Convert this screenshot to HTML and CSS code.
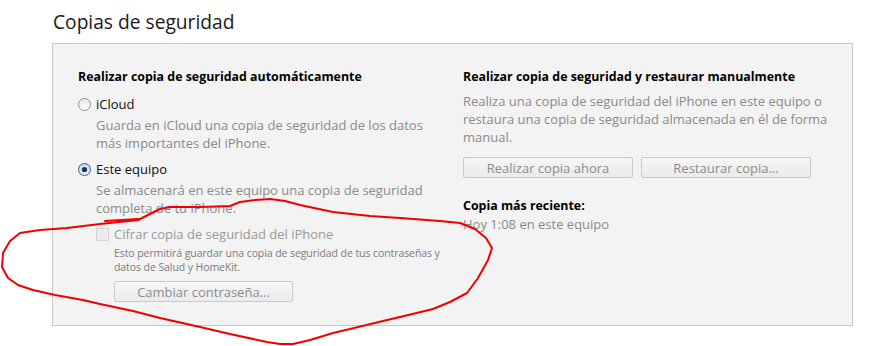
FILE: index.html
```html
<!DOCTYPE html>
<html lang="es">
<head>
<meta charset="utf-8">
<title>Copias de seguridad</title>
<link rel="stylesheet" href="styles.css">
</head>
<body>
<div class="page">
  <h1 class="title">Copias de seguridad</h1>
  <div class="panel">
    <div class="col col-left">
      <div class="heading">Realizar copia de seguridad automáticamente</div>
      <div class="option first">
        <svg class="radio" width="13" height="13" viewBox="0 0 13 13"><defs><linearGradient id="rg1" x1="0" y1="0" x2="0" y2="1"><stop offset="0" stop-color="#e9e9e9"/><stop offset="1" stop-color="#ffffff"/></linearGradient></defs><circle cx="6.5" cy="6.5" r="6" fill="url(#rg1)" stroke="#8e8f8f"/></svg>
        <span class="label">iCloud</span>
      </div>
      <div class="desc">Guarda en iCloud una copia de seguridad de los datos<br>más importantes del iPhone.</div>
      <div class="option">
        <svg class="radio" width="13" height="13" viewBox="0 0 13 13"><defs><linearGradient id="rg2" x1="0" y1="0" x2="0" y2="1"><stop offset="0" stop-color="#c3d9ee"/><stop offset="1" stop-color="#e8f1fa"/></linearGradient></defs><circle cx="6.5" cy="6.5" r="6" fill="url(#rg2)" stroke="#2c628b"/><circle cx="6.5" cy="6.5" r="2.6" fill="#1d3650"/></svg>
        <span class="label">Este equipo</span>
      </div>
      <div class="desc">Se almacenará en este equipo una copia de seguridad<br>completa de tu iPhone.</div>
      <div class="sub">
        <div class="check-row">
          <span class="checkbox"></span>
          <span class="label disabled">Cifrar copia de seguridad del iPhone</span>
        </div>
        <div class="small">Esto permitirá guardar una copia de seguridad de tus contraseñas y<br>datos de Salud y HomeKit.</div>
        <button class="btn btn-wide" type="button">Cambiar contraseña...</button>
      </div>
    </div>
    <div class="col col-right">
      <div class="heading">Realizar copia de seguridad y restaurar manualmente</div>
      <div class="rdesc">Realiza una copia de seguridad del iPhone en este equipo o<br>restaura una copia de seguridad almacenada en él de forma<br>manual.</div>
      <div class="btn-row">
        <button class="btn" type="button">Realizar copia ahora</button>
        <button class="btn" type="button">Restaurar copia...</button>
      </div>
      <div class="latest-title">Copia más reciente:</div>
      <div class="latest">Hoy 1:08 en este equipo</div>
    </div>
  </div>
</div>
<svg class="scribble" width="873" height="346" viewBox="0 0 873 346">
  <path d="M105,221 L138,219" />
  <polyline points="138,220 150,214 160,209 170,207 200,207 230,206 240,202 255,200 270,199 285,201 300,205 333,212 370,216 400,218 440,221 460,223 475,229 486,238 492,248 488,260 478,278 467,293 450,302 433,309 400,317 383,321 350,329 333,333 310,340 293,344 280,344 267,342 230,334 200,327 160,318 133,311 100,304 83,300 55,295 33,290 18,285 8,278 2,267 3,253 10,241 20,233 40,230 67,228 100,224 138,220" />
</svg>
</body>
</html>
```
FILE: styles.css
```css
html, body {
  margin: 0;
  padding: 0;
  background: #ffffff;
}
body {
  font-family: "Open Sans", "Noto Sans", "DejaVu Sans", sans-serif;
  color: #000;
  width: 873px;
  height: 346px;
  overflow: hidden;
  position: relative;
}
.page {
  padding-left: 52px;
}
.title {
  margin: 0 0 9px 1px;
  padding-top: 10px;
  font-size: 19.2px;
  font-weight: 400;
  line-height: 24px;
  color: #1a1a1a;
}
.panel {
  box-sizing: border-box;
  width: 801px;
  height: 283px;
  border: 1px solid #c8c8c8;
  background: #f3f3f3;
  padding: 24px 0 0 25px;
  display: grid;
  grid-template-columns: 385px 1fr;
}
.heading {
  font-size: 12.4px;
  font-weight: 700;
  line-height: 18px;
  color: #000;
}
.option {
  display: flex;
  align-items: center;
  gap: 5px;
  height: 18px;
  margin-top: 8px;
}
.option.first {
  margin-top: 9px;
}
.radio {
  display: block;
  flex: none;
}
.label {
  font-size: 13px;
  line-height: 18px;
  color: #111;
}
.label.disabled {
  color: #9a9a9a;
}
.desc {
  margin: 3px 0 0 18px;
  font-size: 13px;
  line-height: 18px;
  color: #8a8a8a;
}
.sub {
  margin: 8px 0 0 18px;
}
.check-row {
  display: flex;
  align-items: center;
  gap: 5px;
  height: 18px;
}
.checkbox {
  display: block;
  box-sizing: border-box;
  width: 13px;
  height: 13px;
  border: 1px solid #d4d4d4;
  background: #ececec;
}
.small {
  margin: 3px 0 0 18px;
  font-size: 10.5px;
  line-height: 14px;
  letter-spacing: -0.08px;
  color: #7c7c7c;
}
.btn {
  box-sizing: border-box;
  width: 170px;
  height: 21px;
  padding: 0;
  border: 1px solid #cacaca;
  border-radius: 2px;
  background: linear-gradient(#f6f6f6, #ebebeb);
  font-family: inherit;
  font-size: 13px;
  line-height: 18px;
  color: #8c8c8c;
  text-align: center;
}
.btn-wide {
  display: block;
  width: 179px;
  margin: 7px 0 0 18px;
}
.rdesc {
  margin-top: 6px;
  font-size: 13px;
  line-height: 18px;
  color: #8a8a8a;
}
.btn-row {
  display: flex;
  gap: 8px;
  margin-top: 11px;
}
.latest-title {
  margin-top: 19px;
  font-size: 12.4px;
  font-weight: 700;
  line-height: 18px;
  color: #000;
}
.latest {
  font-size: 13px;
  line-height: 18px;
  color: #8a8a8a;
}
.scribble {
  position: absolute;
  left: 0;
  top: 0;
  pointer-events: none;
}
.scribble path,
.scribble polyline {
  fill: none;
  stroke: #f00000;
  stroke-width: 2;
  stroke-linejoin: round;
  stroke-linecap: round;
}
```
